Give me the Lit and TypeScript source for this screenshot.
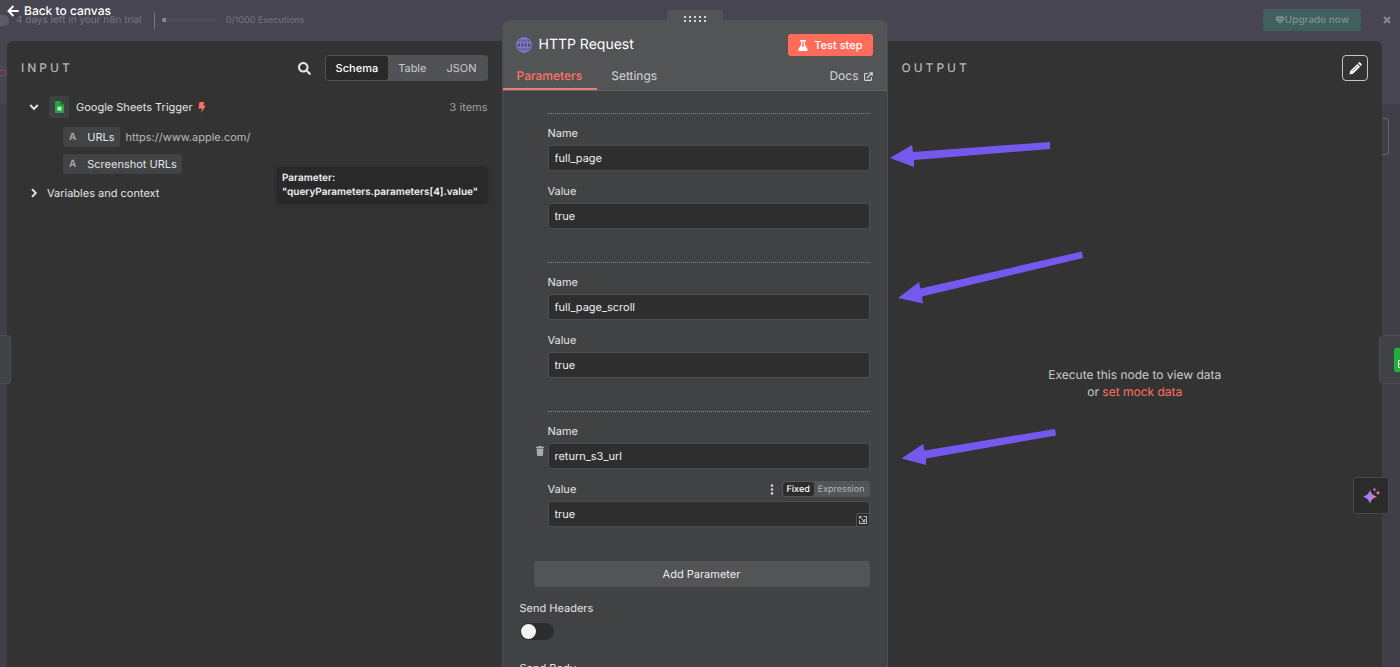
import { LitElement, html, css, svg } from "lit";
import { customElement, property, state } from "lit/decorators.js";
import { classMap } from "lit/directives/class-map.js";

interface Param {
  name: string;
  value: string;
  active?: boolean;
}

const icons = {
  back: html`<svg width="13" height="12" viewBox="0 0 13 12" fill="none" stroke="currentColor" stroke-width="1.9"><path d="M6.4 1 1.5 6l4.9 5M1.8 6h9.9" /></svg>`,
  search: html`<svg width="13" height="13" viewBox="0 0 512 512" fill="currentColor"><path d="M505 442.7L405.3 343c-4.5-4.5-10.6-7-17-7H372c27.6-35.3 44-79.7 44-128C416 93.1 322.9 0 208 0S0 93.1 0 208s93.1 208 208 208c48.3 0 92.7-16.4 128-44v16.3c0 6.4 2.5 12.5 7 17l99.7 99.7c9.4 9.4 24.6 9.4 33.9 0l28.3-28.3c9.4-9.4 9.4-24.6.1-34zM208 336c-70.7 0-128-57.2-128-128 0-70.7 57.2-128 128-128 70.7 0 128 57.2 128 128 0 70.7-57.2 128-128 128z" /></svg>`,
  down: html`<svg width="10" height="10" viewBox="0 0 10 10" fill="none" stroke="currentColor" stroke-width="1.9"><path d="M1.2 3 5 6.8 8.800 3" /></svg>`,
  right: html`<svg width="10" height="10" viewBox="0 0 10 10" fill="none" stroke="currentColor" stroke-width="1.9"><path d="M3 1.200 6.800 5 3 8.800" /></svg>`,
  sheet: html`<svg width="9" height="12" viewBox="0 0 9 12"><path d="M1 0h4.600L9 3.400V11a1 1 0 0 1-1 1H1a1 1 0 0 1-1-1V1a1 1 0 0 1 1-1z" fill="#23a544" /><path d="M5.600 0 9 3.400H5.600z" fill="#176f30" /><path d="M2.500 5.700h4v3.800h-4z" fill="#c8efd1" /></svg>`,
  bolt: html`<svg width="8" height="11" viewBox="0 0 8 11" fill="#ff7260"><path d="M1.500 0h4.700L5.200 3.400h2.600L3.200 11l.9-4.600H.5z" /></svg>`,
  globe: html`<svg width="16" height="16" viewBox="0 0 16 16" fill="none" stroke="#8478e0" stroke-width="1.300"><circle cx="8" cy="8" r="7.200" /><ellipse cx="8" cy="8" rx="3.500" ry="7.200" /><path d="M1.500 5.500h13M1.500 10.500h13M8 .8v14.400" /></svg>`,
  flask: html`<svg width="10" height="11" viewBox="0 0 10 11"><path fill="#fff" fill-rule="evenodd" d="M2.200 0h5.600v1.400H7v3.300l2.600 4.600C10 10.100 9.500 11 8.600 11H1.400C.5 11 0 10.100.4 9.300L3 4.700V1.400h-.8zM4.300 1.400V5L3.400 6.500h3.200L5.700 5V1.400z" /></svg>`,
  external: html`<svg width="9" height="9" viewBox="0 0 9 9" fill="none" stroke="currentColor" stroke-width="1.100"><path d="M4 1.500H1.200a.6.6 0 0 0-.6.6v5.700c0 .3.200.6.600.6h5.600c.300 0 .600-.3.600-.6V5.200M3 6 8 1M5.300.7h3v3" /></svg>`,
  pencil: html`<svg width="13" height="13" viewBox="0 0 13 13"><path fill="#fff" d="M.5 12.500 1.200 9 8.300 1.900l2.800 2.800L4 11.800zM9 1.200l.7-.7c.4-.4 1-.4 1.400 0l1.400 1.400c.4.4.4 1 0 1.400l-.7.7z" /><path d="M3.300 9.300 8.800 3.800" stroke="#333" stroke-width=".7" /></svg>`,
  gem: html`<svg width="10" height="8" viewBox="0 0 10 8"><path d="M2 .2h6L9.900 2.900 5 7.900.1 2.900z" fill="#8b979c" /><path d="M.3 2.900h9.400M3.200 2.900 5 7.700 6.800 2.900 5 .3z" stroke="#40605e" stroke-width=".6" fill="none" /></svg>`,
  close: html`<svg width="8" height="8" viewBox="0 0 8 8" stroke="currentColor" stroke-width="1.800"><path d="m1 1 6 6M7 1 1 7" /></svg>`,
  trash: html`<svg width="8" height="10" viewBox="0 0 8 10" fill="#a9abaf"><path d="M0 .8h2.300L2.800.1h2.400l.5.7H8v1.100H0zM.6 2.600h6.800L7 9.100a.9.900 0 0 1-.9.900H1.900a.9.900 0 0 1-.9-.9z" /></svg>`,
  dots: html`<svg width="4" height="11" viewBox="0 0 4 11" fill="#cfd1d4"><circle cx="2" cy="1.600" r="1.300" /><circle cx="2" cy="5.500" r="1.300" /><circle cx="2" cy="9.400" r="1.300" /></svg>`,
  expand: html`<svg width="8" height="8" viewBox="0 0 8 8" fill="none" stroke="#d0d2d4" stroke-width=".9"><path d="M4.500.5h3v7h-7v-3M.8.8l4.700 4.700M5.700 3v2.700H3M.5 2.600V.5h2.100" /></svg>`,
  sparkle: html`<svg width="17" height="17" viewBox="0 0 17 17"><defs><linearGradient id="ai" gradientUnits="userSpaceOnUse" x1="1" y1="8" x2="14" y2="11"><stop offset=".3" stop-color="#9d7bff" /><stop offset="1" stop-color="#ef7f8f" /></linearGradient></defs><path fill="url(#ai)" d="M7 3c1.500 4 2.600 5.100 7 6.700-4.400 1.600-5.500 2.800-7 7-1.500-4.200-2.600-5.400-7-7C4.400 8.100 5.500 7 7 3z" /><path fill="#b678cf" d="M11.500.3c.4 1.500.8 1.900 2.200 2.300-1.400.4-1.800.8-2.200 2.300-.4-1.500-.8-1.900-2.200-2.300 1.400-.4 1.800-.8 2.200-2.300z" /><circle cx="15" cy="5.800" r="1.500" fill="#e07f98" /></svg>`,
};

const base = css`
  * {
    box-sizing: border-box;
  }
  svg {
    display: block;
    flex: none;
  }
  button {
    font: inherit;
    color: inherit;
    background: none;
    border: 0;
    padding: 0;
    margin: 0;
    display: flex;
    align-items: center;
    justify-content: center;
    text-rendering: inherit;
  }
  a {
    color: inherit;
    text-decoration: none;
  }
  h2 {
    margin: 0;
    font-size: 12px;
    line-height: 16px;
    font-weight: 500;
    letter-spacing: 3px;
    color: #b4b5b7;
  }
`;

@customElement("input-panel")
export class InputPanel extends LitElement {
  @state() private view = "Schema";

  static styles = [
    base,
    css`
      :host {
        display: block;
        padding: 14px 14px 0;
      }
      .head {
        display: flex;
        align-items: center;
        height: 26px;
      }
      .search {
        margin-left: auto;
        margin-right: 14px;
        color: #e6e6e7;
      }
      .views {
        display: flex;
        height: 26px;
        padding: 1px;
        background: #505255;
        border-radius: 4px;
        font-size: 11px;
        color: #c9cbce;
      }
      .view {
        padding: 0 10px;
        border-radius: 3px;
      }
      .view.on {
        background: #292929;
        color: #fff;
        font-weight: 500;
      }
      .row {
        display: flex;
        align-items: center;
        font-size: 11px;
        line-height: 16px;
        color: #e4e5e6;
      }
      .node {
        height: 22px;
        margin-top: 15px;
        padding-left: 8px;
      }
      .logo {
        display: flex;
        align-items: center;
        justify-content: center;
        width: 20px;
        height: 22px;
        margin: 0 7px 0 10px;
        background: #3e4042;
        border-radius: 4px;
      }
      .bolt {
        margin-left: 5px;
      }
      .count {
        margin-left: auto;
        color: #a0a1a3;
      }
      .fields {
        display: grid;
        gap: 7px;
        margin: 9px 0 0 42px;
      }
      .pill {
        display: flex;
        align-items: center;
        height: 20px;
        padding: 0 5px 0 6px;
        gap: 11px;
        border-radius: 3px;
        background: #414345;
      }
      .type {
        font-size: 10px;
        font-weight: 600;
        color: #a9abad;
      }
      .sample {
        margin-left: 6px;
        color: #b9babc;
      }
      .vars {
        margin-top: 11px;
        padding-left: 8px;
        gap: 8px;
      }
    `,
  ];

  render() {
    return html`
      <div class="head">
        <h2>INPUT</h2>
        <button class="search" aria-label="Search">${icons.search}</button>
        <div class="views">
          ${["Schema", "Table", "JSON"].map(
            (v) => html`<button class=${classMap({ view: true, on: v === this.view })} @click=${() => (this.view = v)}>${v}</button>`
          )}
        </div>
      </div>
      <div class="row node">
        <button aria-label="Collapse">${icons.down}</button>
        <span class="logo">${icons.sheet}</span>
        <span>Google Sheets Trigger</span>
        <span class="bolt">${icons.bolt}</span>
        <span class="count">3 items</span>
      </div>
      <div class="fields">
        <div class="row">
          <span class="pill"><span class="type">A</span>URLs</span>
          <span class="sample">https://www.apple.com/</span>
        </div>
        <div class="row">
          <span class="pill"><span class="type">A</span>Screenshot URLs</span>
        </div>
      </div>
      <div class="row vars">
        <button aria-label="Expand">${icons.right}</button>
        <span>Variables and context</span>
      </div>
    `;
  }
}

@customElement("param-item")
export class ParamItem extends LitElement {
  @property({ attribute: false }) param: Param = { name: "", value: "" };

  static styles = [
    base,
    css`
      :host {
        display: block;
        position: relative;
        padding: 11px 0 33px;
        border-top: 1px dotted #85878a;
      }
      .line {
        display: flex;
        align-items: center;
        height: 16px;
        margin-bottom: 4px;
      }
      .second {
        margin-top: 12px;
      }
      label {
        font-size: 11px;
        line-height: 16px;
        color: #e4e5e6;
      }
      input {
        display: block;
        width: 100%;
        height: 26px;
        padding: 0 6px;
        font: inherit;
        font-size: 11px;
        text-rendering: inherit;
        color: #f0f0f1;
        background: #2e2e2e;
        border: 1px solid #4b4d50;
        border-radius: 3px;
        outline: none;
      }
      .trash {
        position: absolute;
        left: -12px;
        top: 34px;
      }
      .more {
        margin: 0 8px 0 auto;
      }
      .mode {
        display: flex;
        height: 16px;
        padding: 1px;
        border-radius: 3px;
        background: #535558;
        font-size: 9px;
        color: #b3b5b8;
      }
      .opt {
        padding: 0 4px;
        border-radius: 3px;
      }
      .opt.on {
        background: #2c2c2c;
        color: #fff;
        font-weight: 500;
      }
      .box {
        position: relative;
      }
      .expand {
        position: absolute;
        right: 1px;
        bottom: 1px;
        width: 13px;
        height: 13px;
        border: 1px solid #4c4e50;
        border-width: 1px 0 0 1px;
        border-radius: 3px 0 0 0;
      }
    `,
  ];

  render() {
    const p = this.param;
    return html`
      ${p.active ? html`<button class="trash" aria-label="Delete">${icons.trash}</button>` : ""}
      <div class="line"><label for="name">Name</label></div>
      <input id="name" type="text" .value=${p.name} />
      <div class="line second">
        <label for="value">Value</label>
        ${p.active
          ? html`<button class="more" aria-label="Options">${icons.dots}</button>
              <div class="mode"><button class="opt on">Fixed</button><button class="opt">Expression</button></div>`
          : ""}
      </div>
      <div class="box">
        <input id="value" type="text" .value=${p.value} />
        ${p.active ? html`<button class="expand" aria-label="Open editor">${icons.expand}</button>` : ""}
      </div>
    `;
  }
}

@customElement("node-panel")
export class NodePanel extends LitElement {
  private params: Param[] = [
    { name: "full_page", value: "true" },
    { name: "full_page_scroll", value: "true" },
    { name: "return_s3_url", value: "true", active: true },
  ];

  static styles = [
    base,
    css`
      :host {
        display: flex;
        flex-direction: column;
        position: relative;
        background: #414244;
        border: 1px solid #4b4d4f;
        border-width: 0 1px;
        border-radius: 7px 7px 0 0;
      }
      .grip {
        position: absolute;
        left: 50%;
        top: -10px;
        width: 56px;
        height: 12px;
        margin-left: -28px;
        display: flex;
        justify-content: center;
        padding-top: 6px;
        background: #525456;
        border-radius: 4px 4px 0 0;
      }
      header {
        background: #525456;
        border-bottom: 1px solid #606265;
        border-radius: 7px 7px 0 0;
      }
      .title {
        display: flex;
        align-items: center;
        gap: 7px;
        height: 22px;
        margin: 14px 14px 0 13px;
        font-size: 14px;
        line-height: 18px;
        color: #fff;
      }
      .test {
        height: 22px;
        margin-left: auto;
        padding: 0 10px;
        gap: 6px;
        border-radius: 3px;
        background: #ff6d5a;
        font-size: 11px;
        font-weight: 500;
      }
      .tabs {
        display: flex;
        justify-content: space-between;
        height: 34px;
        font-size: 12px;
        line-height: 16px;
        color: #d4d6d9;
      }
      .tab {
        padding: 12px 15px 0 14px;
        height: 34px;
        align-items: flex-start;
        border-bottom: 2px solid transparent;
      }
      .tab.on {
        color: #ff7260;
        border-color: #e87f72;
        font-weight: 500;
      }
      .group {
        display: flex;
      }
      .docs {
        display: flex;
        align-items: center;
        gap: 5px;
        height: 16px;
        margin: 12px 14px 0 0;
      }
      .body {
        padding: 22px 17px 0;
      }
      .list {
        margin-left: 28px;
      }
      .add {
        width: calc(100% - 14px);
        height: 26px;
        margin: 1px 0 13px 14px;
        border-radius: 3px;
        background: #525456;
        font-size: 11px;
        color: #f0f0f1;
      }
      .switch {
        display: grid;
        justify-items: start;
        gap: 7px;
        margin-bottom: 20px;
        font-size: 11px;
        line-height: 16px;
        color: #e4e5e6;
      }
      .switch input {
        appearance: none;
        width: 34px;
        height: 17px;
        margin: 0;
        padding: 1px;
        border-radius: 9px;
        background: #2c2c2c;
      }
      .switch input::before {
        content: "";
        display: block;
        width: 15px;
        height: 15px;
        border-radius: 50%;
        background: #f2f3f6;
      }
      .switch input:checked::before {
        margin-left: auto;
      }
    `,
  ];

  render() {
    return html`
      <div class="grip">
        <svg width="24" height="7" viewBox="0 0 24 7" fill="#d4d5d7">
          ${[0, 1, 2, 3, 4].map((i) => svg`<rect x=${i * 5 + 1} y="0" width="2" height="2" /><rect x=${i * 5 + 1} y="4" width="2" height="2" />`)}
        </svg>
      </div>
      <header>
        <div class="title">
          ${icons.globe}<span>HTTP Request</span>
          <button class="test">${icons.flask}Test step</button>
        </div>
        <nav class="tabs">
          <div class="group">
            <button class="tab on">Parameters</button>
            <button class="tab">Settings</button>
          </div>
          <a class="docs" href="#docs">Docs ${icons.external}</a>
        </nav>
      </header>
      <div class="body">
        <div class="list">${this.params.map((p) => html`<param-item .param=${p}></param-item>`)}</div>
        <button class="add">Add Parameter</button>
        <div class="switch"><label for="headers">Send Headers</label><input id="headers" type="checkbox" /></div>
        <div class="switch"><label for="sendbody">Send Body</label><input id="sendbody" type="checkbox" /></div>
      </div>
    `;
  }
}

@customElement("output-panel")
export class OutputPanel extends LitElement {
  static styles = [
    base,
    css`
      :host {
        display: flex;
        flex-direction: column;
        padding: 14px 14px 0;
      }
      .head {
        display: flex;
        align-items: center;
        justify-content: space-between;
        height: 26px;
      }
      .edit {
        width: 26px;
        height: 26px;
        border: 1px solid #c4c5c6;
        border-radius: 4px;
      }
      .empty {
        flex: 1;
        display: grid;
        place-content: center;
        text-align: center;
        font-size: 12px;
        line-height: 17px;
        color: #c9cbce;
        padding-bottom: 36px;
      }
      .empty p {
        margin: 0;
      }
      .empty a {
        color: #ff7260;
      }
    `,
  ];

  render() {
    return html`
      <div class="head">
        <h2>OUTPUT</h2>
        <button class="edit" aria-label="Edit output">${icons.pencil}</button>
      </div>
      <div class="empty">
        <p>Execute this node to view data</p>
        <p>or <a href="#mock">set mock data</a></p>
      </div>
    `;
  }
}

@customElement("app-root")
export class AppRoot extends LitElement {
  static styles = [
    base,
    css`
      :host {
        display: block;
        position: relative;
        height: 100vh;
        overflow: hidden;
        font-family: Inter, "Liberation Sans", sans-serif;
        text-rendering: geometricPrecision;
        background: linear-gradient(#474551 104px, #403e47 104px);
      }
      .banner {
        position: absolute;
        inset: 0 0 auto 0;
        display: flex;
        align-items: center;
        height: 40px;
        padding-right: 9px;
        font-size: 10px;
        color: #77767e;
      }
      .badge {
        width: 9px;
        height: 11px;
        border-radius: 0 5px 5px 0;
        background: #5c5a64;
        margin-right: 7px;
      }
      .rule {
        width: 1px;
        height: 17px;
        margin: 0 7px 0 12px;
        background: #77767e;
      }
      .meter {
        width: 54px;
        height: 4px;
        margin-right: 10px;
        border-radius: 2px;
        background: linear-gradient(90deg, #8b8a92 4px, #4d4b57 4px);
      }
      .runs {
        font-size: 9px;
      }
      .upgrade {
        height: 22px;
        margin-left: auto;
        padding: 0 12px;
        border-radius: 3px;
        background: #40605e;
        font-weight: 500;
        color: #7e8f91;
      }
      .close {
        margin-left: 22px;
        color: #8b8a92;
      }
      .back {
        position: absolute;
        left: 7px;
        top: 3px;
        display: flex;
        align-items: center;
        gap: 4px;
        font-size: 12px;
        line-height: 16px;
        font-weight: 500;
        color: #fff;
      }
      main {
        display: grid;
        grid-template-columns: minmax(0, 1fr) 386px minmax(0, 1fr);
        height: 100%;
        padding: 20px 18px 0 7px;
      }
      .side {
        margin-top: 21px;
        background: #333;
      }
      input-panel {
        border-radius: 6px 0 0 0;
      }
      output-panel {
        border-radius: 0 6px 0 0;
      }
      .tip {
        position: absolute;
        left: 277px;
        top: 167px;
        padding: 3px 8px 3px 4px;
        border: 1px solid #252525;
        border-radius: 3px;
        background: #292929;
        box-shadow: 0 1px 5px #0004;
        font-size: 10px;
        line-height: 14px;
        font-weight: 600;
        color: #f2f2f3;
      }
      .prev,
      .next {
        position: absolute;
        top: 335px;
        height: 49px;
        background: #414244;
        border: 1px solid #4b4d4f;
      }
      .prev {
        left: 0;
        width: 11px;
        border-left: 0;
        border-radius: 0 4px 4px 0;
      }
      .next {
        right: 0;
        width: 21px;
        border-right: 0;
        border-radius: 5px 0 0 5px;
        display: flex;
        align-items: center;
        justify-content: flex-end;
      }
      .canvas-node {
        position: absolute;
        right: 11px;
        top: 118px;
        width: 7px;
        height: 37px;
        border: 1px solid #66646d;
        border-left: 0;
        border-radius: 0 3px 3px 0;
      }
      .port {
        position: absolute;
        left: -1px;
        top: 69px;
        width: 8px;
        height: 8px;
        border: 1px solid #91465a;
        border-radius: 50%;
      }
      .assistant {
        position: absolute;
        right: 11px;
        top: 477px;
        width: 36px;
        height: 37px;
        border: 1px solid #48494b;
        border-radius: 3px;
        background: #2b2b2b;
      }
      .arrows {
        position: absolute;
        left: 888px;
        top: 130px;
        pointer-events: none;
      }
    `,
  ];

  render() {
    return html`
      <div class="banner">
        <span class="badge"></span>
        <span>4 days left in your n8n trial</span>
        <span class="rule"></span>
        <span class="meter"></span>
        <span class="runs">0/1000 Executions</span>
        <button class="upgrade">${icons.gem}Upgrade now</button>
        <button class="close" aria-label="Close banner">${icons.close}</button>
      </div>
      <span class="port"></span>
      <span class="canvas-node"></span>
      <a class="back" href="#canvas">${icons.back}Back to canvas</a>
      <main>
        <input-panel class="side"></input-panel>
        <node-panel></node-panel>
        <output-panel class="side"></output-panel>
      </main>
      <div class="tip" role="tooltip">Parameter:<br />"queryParameters.parameters[4].value"</div>
      <button class="prev" aria-label="Previous node"></button>
      <button class="next" aria-label="Next node">
        <svg width="6" height="24" viewBox="0 0 6 24"><path d="M2 0h4v24H2a2 2 0 0 1-2-2V2a2 2 0 0 1 2-2z" fill="#23ad3e" /><path d="M6 12.500H4.500v7H6M4.500 16H6" stroke="#d5f3da" fill="none" /></svg>
      </button>
      <button class="assistant" aria-label="Assistant">${icons.sparkle}</button>
      <svg class="arrows" width="200" height="340" viewBox="888 130 200 340" fill="#7559ee">
        <path d="M890 158 912 145 913 152 1050 142V149L914 160 914 167z" />
        <path d="M898 298 919 282 920.500 288.500 1082 251.500 1083 258 922 296.500 923 303.500z" />
        <path d="M901.500 458.500 923 444 924.500 450.500 1055 429 1056 435.500 926 458.500 926 465z" />
      </svg>
    `;
  }
}
